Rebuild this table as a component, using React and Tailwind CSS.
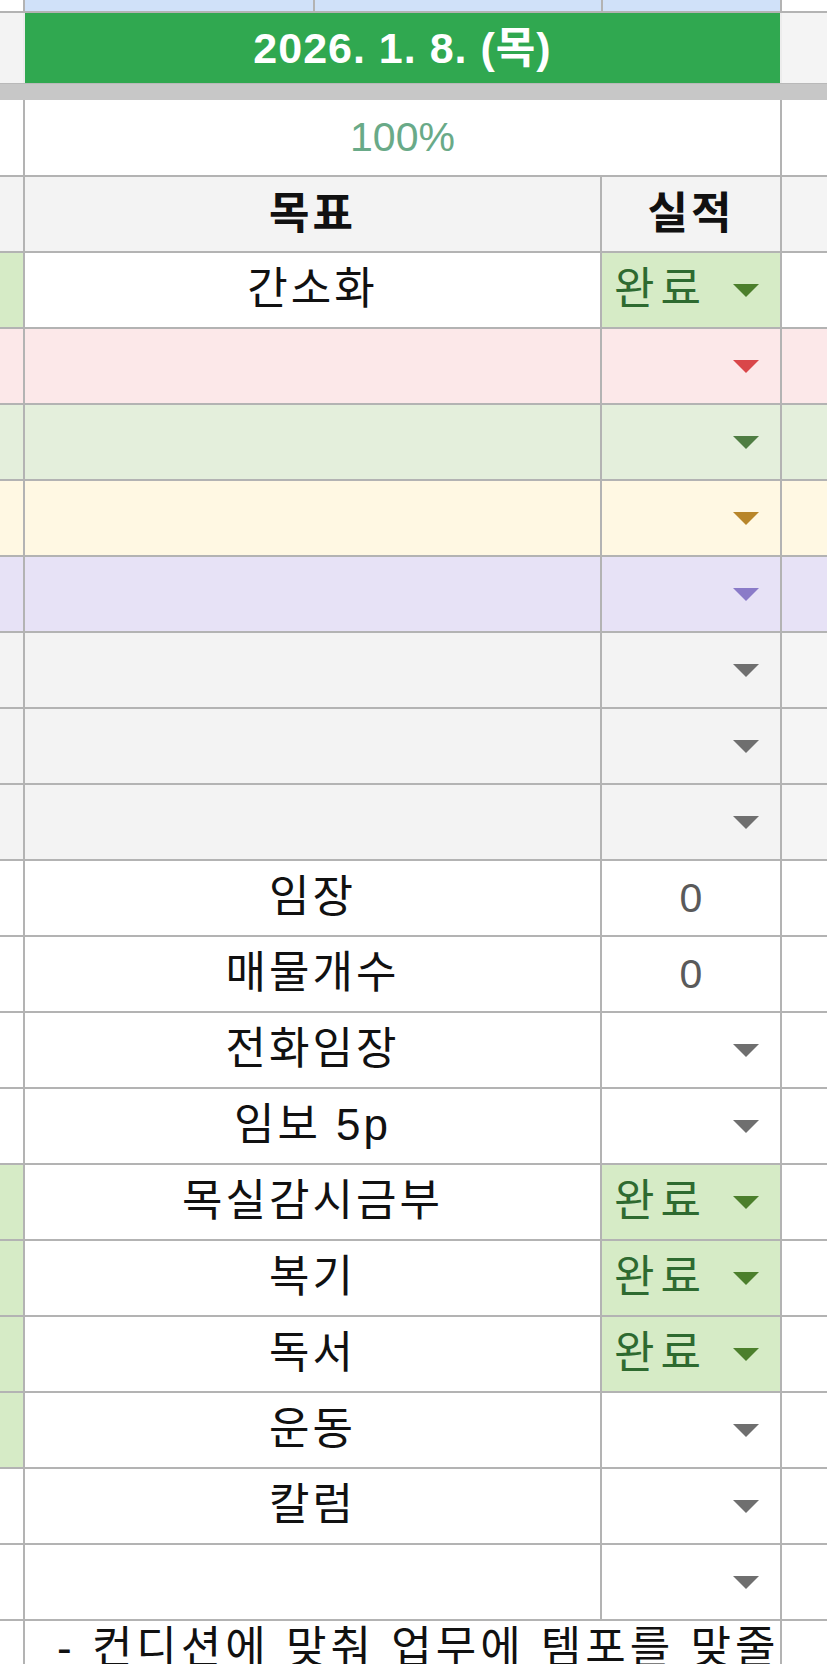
const LINE = "border-[#b3b3b3]";

function Arrow({ color }) {
  return (
    <svg width="26" height="13" viewBox="0 0 26 13" className="shrink-0">
      <polygon points="0,0 26,0 13,13" fill={color} />
    </svg>
  );
}

const rows = [
  { goal: "간소화", left: "bg-[#d6ebc6]", main: "bg-white", res: "bg-[#d6ebc6]", right: "bg-white", done: true, arrow: "#4c7f2c" },
  { left: "bg-[#fce8e9]", main: "bg-[#fce8e9]", res: "bg-[#fce8e9]", right: "bg-[#fce8e9]", arrow: "#d9474a" },
  { left: "bg-[#e4efdc]", main: "bg-[#e4efdc]", res: "bg-[#e4efdc]", right: "bg-[#e4efdc]", arrow: "#4f7d43" },
  { left: "bg-[#fff8e3]", main: "bg-[#fff8e3]", res: "bg-[#fff8e3]", right: "bg-[#fff8e3]", arrow: "#b8862a" },
  { left: "bg-[#e7e2f6]", main: "bg-[#e7e2f6]", res: "bg-[#e7e2f6]", right: "bg-[#e7e2f6]", arrow: "#8a7bc8" },
  { left: "bg-[#f3f3f3]", main: "bg-[#f3f3f3]", res: "bg-[#f3f3f3]", right: "bg-[#f5f5f5]", arrow: "#6f6f6f" },
  { left: "bg-[#f3f3f3]", main: "bg-[#f3f3f3]", res: "bg-[#f3f3f3]", right: "bg-[#f5f5f5]", arrow: "#6f6f6f" },
  { left: "bg-[#f3f3f3]", main: "bg-[#f3f3f3]", res: "bg-[#f3f3f3]", right: "bg-[#f5f5f5]", arrow: "#6f6f6f" },
  { goal: "임장", left: "bg-white", main: "bg-white", res: "bg-white", right: "bg-white", value: "0" },
  { goal: "매물개수", left: "bg-white", main: "bg-white", res: "bg-white", right: "bg-white", value: "0" },
  { goal: "전화임장", left: "bg-white", main: "bg-white", res: "bg-white", right: "bg-white", arrow: "#6f6f6f" },
  { goal: "임보 5p", left: "bg-white", main: "bg-white", res: "bg-white", right: "bg-white", arrow: "#6f6f6f" },
  { goal: "목실감시금부", left: "bg-[#d6ebc6]", main: "bg-white", res: "bg-[#d6ebc6]", right: "bg-white", done: true, arrow: "#4c7f2c" },
  { goal: "복기", left: "bg-[#d6ebc6]", main: "bg-white", res: "bg-[#d6ebc6]", right: "bg-white", done: true, arrow: "#4c7f2c" },
  { goal: "독서", left: "bg-[#d6ebc6]", main: "bg-white", res: "bg-[#d6ebc6]", right: "bg-white", done: true, arrow: "#4c7f2c" },
  { goal: "운동", left: "bg-[#d6ebc6]", main: "bg-white", res: "bg-white", right: "bg-white", arrow: "#6f6f6f" },
  { goal: "칼럼", left: "bg-white", main: "bg-white", res: "bg-white", right: "bg-white", arrow: "#6f6f6f" },
  { left: "bg-white", main: "bg-white", res: "bg-white", right: "bg-white", arrow: "#6f6f6f" },
];

function Row({ r }) {
  return (
    <div className={`flex h-[76px] shrink-0 border-b-2 ${LINE}`}>
      <div className={`w-[23px] ${r.left}`} />
      <div className={`w-[579px] border-x-2 ${LINE} ${r.main} flex items-center justify-center pb-[2px] text-[44px] tracking-[3px] text-[#111]`}>
        {r.goal}
      </div>
      <div className={`w-[180px] border-r-2 ${LINE} ${r.res} flex items-center`}>
        {r.done ? (
          <div className="flex w-full items-center justify-between pl-[12px] pr-[21px]">
            <span className="pb-[2px] text-[44px] tracking-[6px] text-[#2e6a30]">완료</span>
            <Arrow color={r.arrow} />
          </div>
        ) : r.value ? (
          <div className="w-full text-center text-[#5a5a5a]">{r.value}</div>
        ) : (
          <div className="flex w-full justify-end pr-[21px]">
            <Arrow color={r.arrow} />
          </div>
        )}
      </div>
      <div className={`flex-1 ${r.right}`} />
    </div>
  );
}

export default function App() {
  return (
    <div
      className="flex h-screen w-[827px] flex-col overflow-hidden bg-white text-[41px] leading-none"
      style={{ fontFamily: '"Liberation Sans", "Noto Sans CJK KR", sans-serif' }}
    >
      {/* top blue row */}
      <div className={`flex h-[13px] shrink-0 border-b-2 ${LINE}`}>
        <div className="w-[23px] bg-white" />
        <div className={`w-[290px] border-l-2 ${LINE} bg-[#d0e1f9]`} />
        <div className={`w-[288px] border-l-2 ${LINE} bg-[#d0e1f9]`} />
        <div className={`w-[181px] border-x-2 ${LINE} bg-[#d0e1f9]`} />
        <div className="flex-1 bg-white" />
      </div>

      {/* date bar */}
      <div className="flex h-[70px] shrink-0">
        <div className="w-[23px] bg-[#f3f3f3]" />
        <div className="flex w-[759px] items-center justify-center border-x-2 border-[#ececec] bg-[#30a850] text-[43px] font-bold tracking-[1px] text-white">
          2026. 1. 8. (목)
        </div>
        <div className="flex-1 bg-[#f4f4f4]" />
      </div>

      {/* freeze bar */}
      <div className="h-[17px] shrink-0 border-t border-[#b9b9b9] bg-[#c7c7c7]" />

      {/* percent row */}
      <div className={`flex h-[77px] shrink-0 border-b-2 ${LINE}`}>
        <div className="w-[23px] bg-white" />
        <div className={`flex w-[759px] items-center justify-center border-x-2 ${LINE} bg-white text-[#69aa88]`}>
          100%
        </div>
        <div className="flex-1 bg-white" />
      </div>

      {/* header row */}
      <div className={`flex h-[76px] shrink-0 border-b-2 ${LINE}`}>
        <div className="w-[23px] bg-[#f3f3f3]" />
        <div className={`flex w-[579px] items-center justify-center border-x-2 ${LINE} bg-[#f3f3f3] text-[44px] font-bold tracking-[3px] text-[#111]`}>
          목표
        </div>
        <div className={`flex w-[180px] items-center justify-center border-r-2 ${LINE} bg-[#f3f3f3] text-[44px] font-bold tracking-[3px] text-[#111]`}>
          실적
        </div>
        <div className="flex-1 bg-[#f4f4f4]" />
      </div>

      {rows.map((r, i) => (
        <Row key={i} r={r} />
      ))}

      {/* note row, cut off by the window */}
      <div className="flex h-[76px] shrink-0">
        <div className="w-[23px] bg-white" />
        <div className={`w-[759px] overflow-hidden whitespace-nowrap border-x-2 ${LINE} bg-white pl-[32px] pt-[5px] text-[44px] tracking-[4px] text-[#111]`}>
          - 컨디션에 맞춰 업무에 템포를 맞줄
        </div>
        <div className="flex-1 bg-white" />
      </div>
    </div>
  );
}
